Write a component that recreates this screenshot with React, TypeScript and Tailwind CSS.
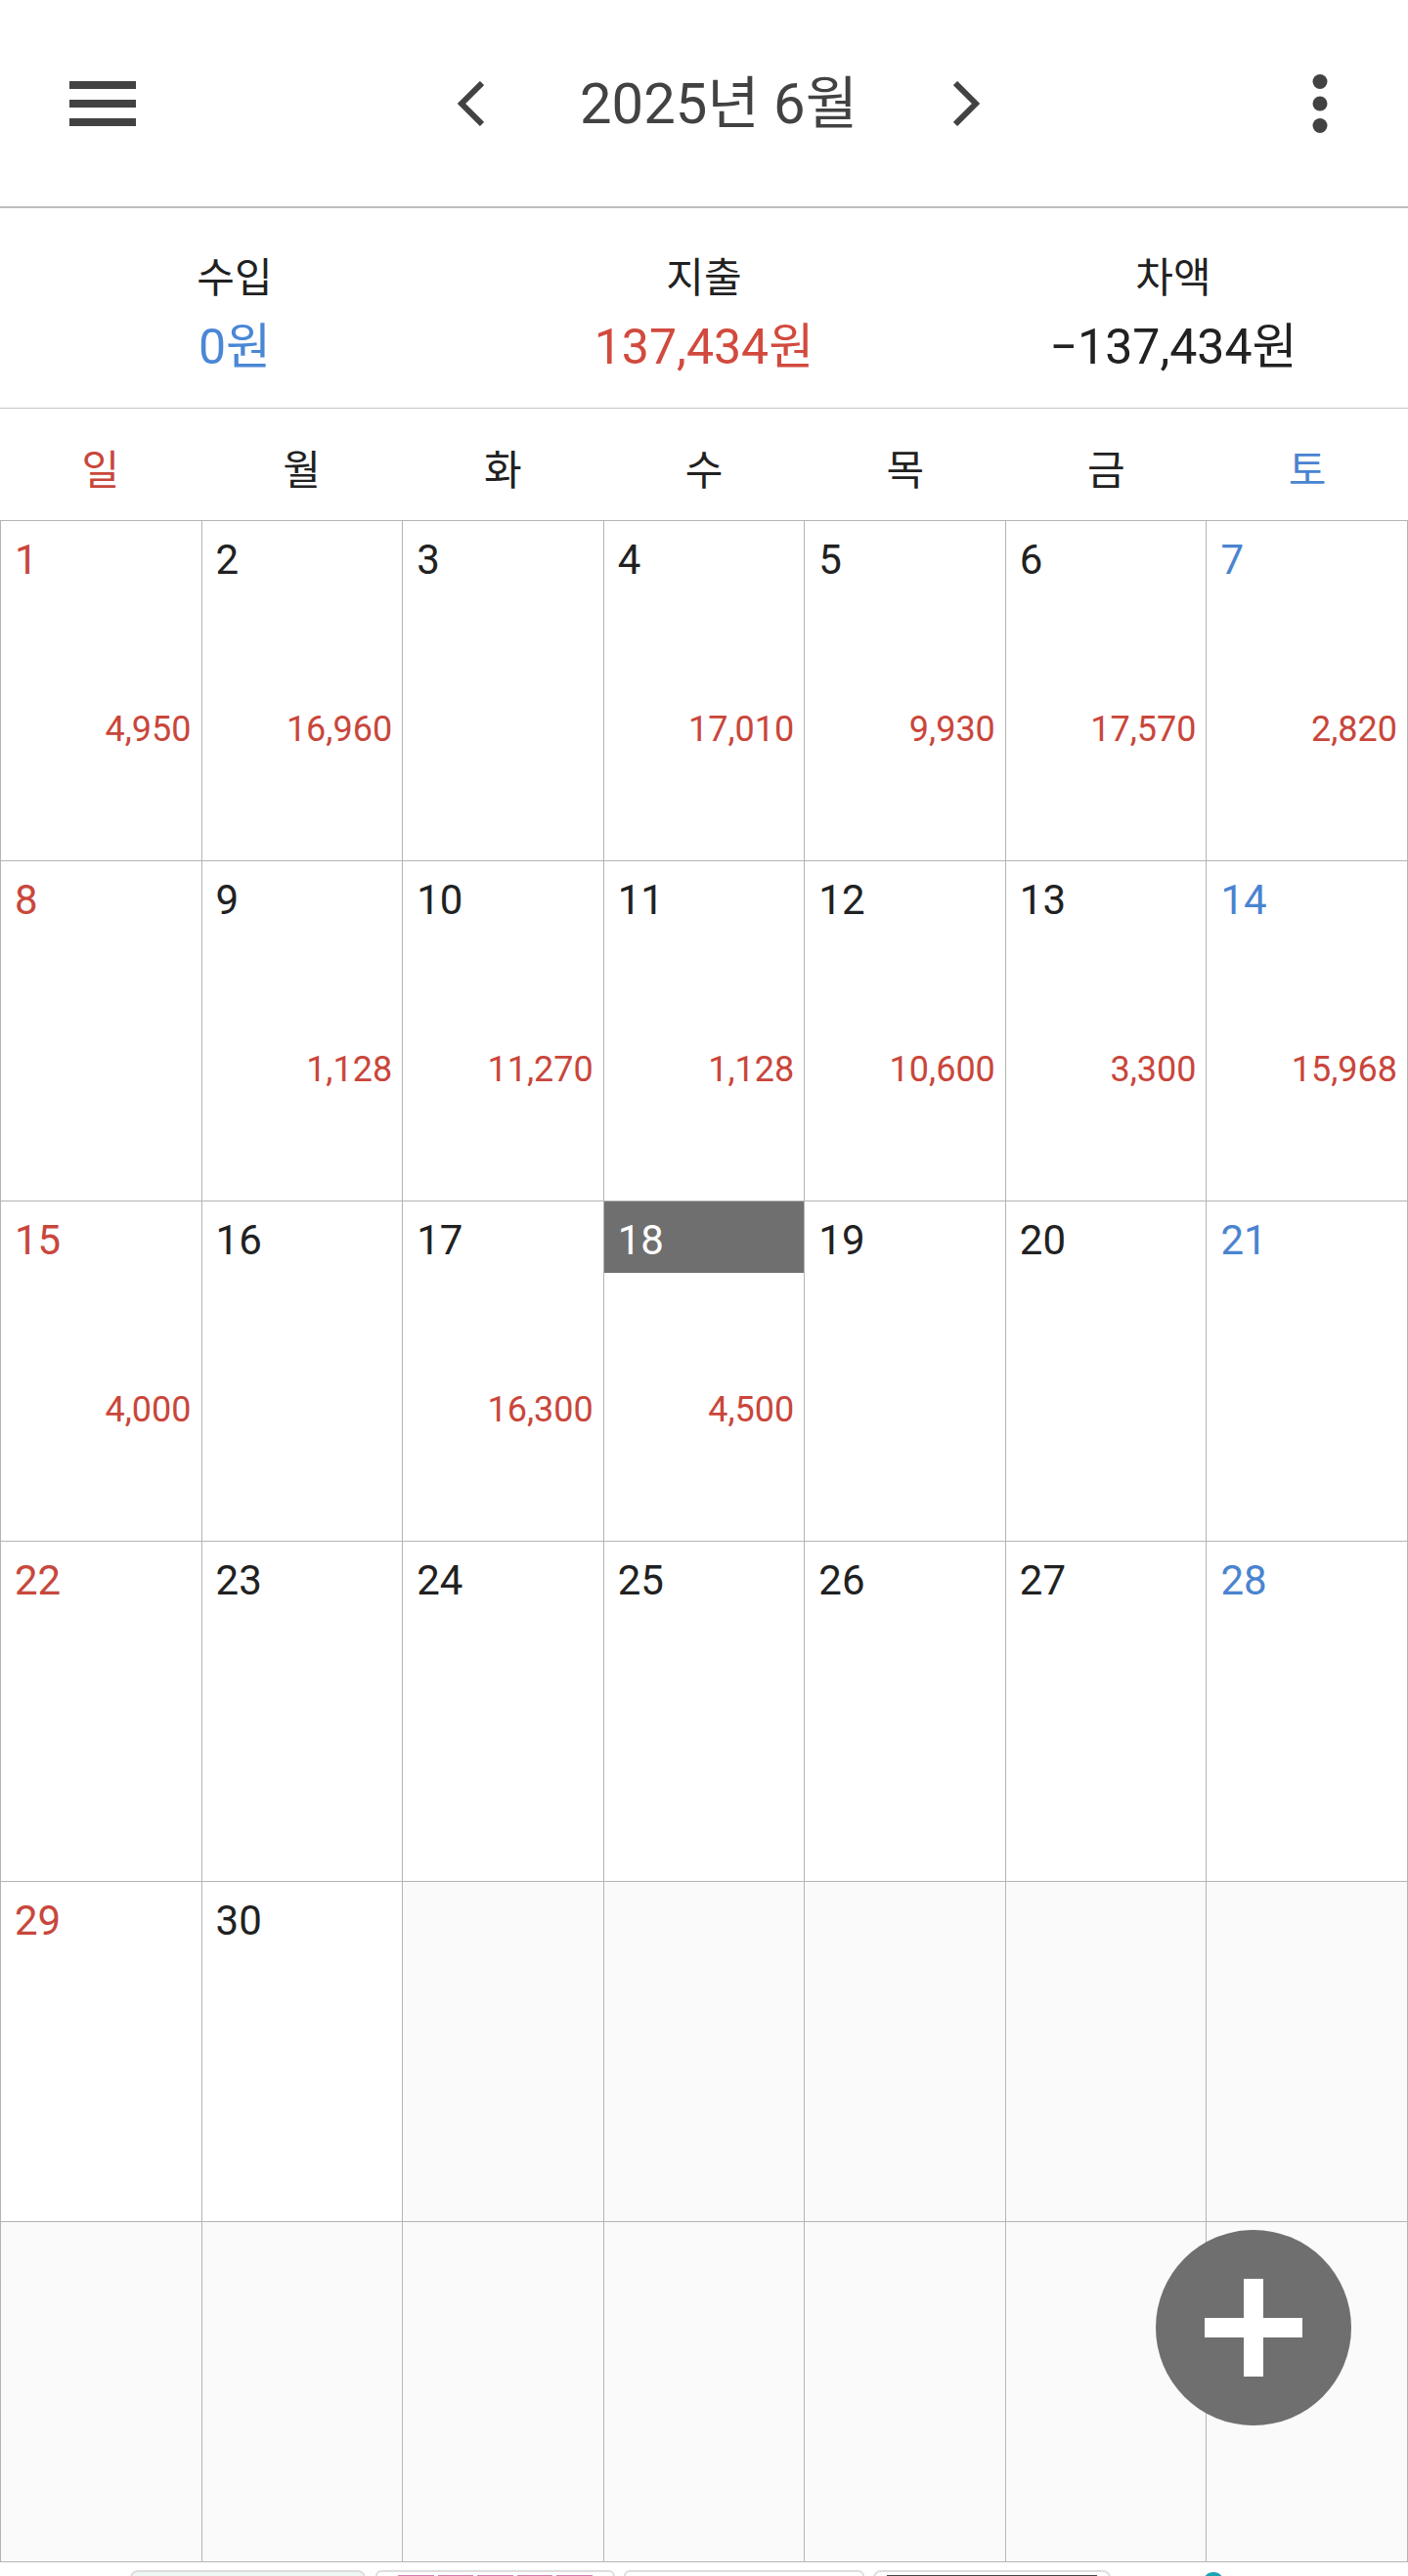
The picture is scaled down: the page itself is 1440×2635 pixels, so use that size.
import React from "react";

type Day = {
  day?: number;
  amount?: string;
};

const weekdays = ["일", "월", "화", "수", "목", "금", "토"];

const amounts: { [key: number]: string } = {
  1: "4,950",
  2: "16,960",
  4: "17,010",
  5: "9,930",
  6: "17,570",
  7: "2,820",
  9: "1,128",
  10: "11,270",
  11: "1,128",
  12: "10,600",
  13: "3,300",
  14: "15,968",
  15: "4,000",
  17: "16,300",
  18: "4,500",
};

const TODAY = 18;

function buildCells(): Day[] {
  const cells: Day[] = [];
  for (let d = 1; d <= 30; d++) {
    cells.push({ day: d, amount: amounts[d] });
  }
  while (cells.length < 42) cells.push({});
  return cells;
}

function dayColor(index: number) {
  const col = index % 7;
  if (col === 0) return "text-[#c8473c]";
  if (col === 6) return "text-[#4a84d0]";
  return "text-[#212121]";
}

function Header() {
  return (
    <div className="flex h-[213px] items-center border-b-2 border-[#bdbdbd] bg-white">
      <svg className="ml-[71px] h-[46px] w-[68px]" viewBox="0 0 68 46">
        <rect x="0" y="0" width="68" height="8" fill="#424242" />
        <rect x="0" y="19" width="68" height="8" fill="#424242" />
        <rect x="0" y="38" width="68" height="8" fill="#424242" />
      </svg>
      <svg className="ml-[329px] h-[46px] w-[27px]" viewBox="0 0 27 46">
        <polyline points="25,2 4,23 25,44" fill="none" stroke="#424242" strokeWidth="6" />
      </svg>
      <div className="w-[480px] text-center text-[58px] leading-[70px] text-[#424242]">2025년 6월</div>
      <svg className="h-[46px] w-[27px]" viewBox="0 0 27 46">
        <polyline points="2,2 23,23 2,44" fill="none" stroke="#424242" strokeWidth="6" />
      </svg>
      <svg className="ml-auto mr-[82px] h-[60px] w-[16px]" viewBox="0 0 16 60">
        <circle cx="8" cy="7.5" r="7.5" fill="#424242" />
        <circle cx="8" cy="30" r="7.5" fill="#424242" />
        <circle cx="8" cy="52.5" r="7.5" fill="#424242" />
      </svg>
    </div>
  );
}

function Summary() {
  const items = [
    { label: "수입", value: "0원", color: "text-[#4a87d6]" },
    { label: "지출", value: "137,434원", color: "text-[#d24a3e]" },
    { label: "차액", value: "−137,434원", color: "text-[#212121]" },
  ];
  return (
    <div className="grid h-[205px] grid-cols-3 items-center border-b border-[#c4c4c4] bg-white pt-[10px]">
      {items.map((item) => (
        <div key={item.label} className="flex flex-col items-center">
          <div className="text-[42px] leading-[70px] text-[#212121]">{item.label}</div>
          <div className={`text-[50px] leading-[70px] ${item.color}`}>{item.value}</div>
        </div>
      ))}
    </div>
  );
}

function Weekdays() {
  return (
    <div className="grid h-[115px] grid-cols-7 items-center border-b border-[#b4b4b4] bg-white">
      {weekdays.map((w, i) => (
        <div key={w} className={`pt-[14px] text-center text-[42px] leading-[60px] ${dayColor(i)}`}>
          {w}
        </div>
      ))}
    </div>
  );
}

function Calendar() {
  const cells = buildCells();
  return (
    <div className="grid grid-cols-7 border-l border-[#b4b4b4]">
      {cells.map((cell, i) => {
        const isToday = cell.day === TODAY;
        return (
          <div
            key={i}
            className={`h-[348px] border-r border-b border-[#b4b4b4] ${cell.day ? "bg-white" : "bg-[#fafafa]"}`}
          >
            {cell.day && (
              <>
                <div
                  className={`h-[73px] pl-[14px] pt-[15px] text-[42px] leading-[50px] ${
                    isToday ? "bg-[#6f6f6f] text-white" : dayColor(i)
                  }`}
                >
                  {cell.day}
                </div>
                {cell.amount && (
                  <div className="mt-[119px] pr-[10px] text-right text-[36px] leading-[43px] text-[#c9463b]">
                    {cell.amount}
                  </div>
                )}
              </>
            )}
          </div>
        );
      })}
    </div>
  );
}

function AdStrip() {
  return (
    <div className="flex h-[14px] items-start overflow-hidden bg-white pt-[8px]">
      <div className="ml-[133px] h-[20px] w-[241px] rounded-t-[8px] border-2 border-[#dedede] bg-[#eef6f6]" />
      <div className="ml-[10px] flex h-[20px] w-[245px] gap-[4px] rounded-t-[6px] border-2 border-[#dedede] bg-white px-[21px] pt-[3px]">
        <div className="h-[10px] flex-1 bg-[#d57ab0]" />
        <div className="h-[10px] flex-1 bg-[#d57ab0]" />
        <div className="h-[10px] flex-1 bg-[#d57ab0]" />
        <div className="h-[10px] flex-1 bg-[#d57ab0]" />
        <div className="h-[10px] flex-1 bg-[#d57ab0]" />
      </div>
      <div className="ml-[9px] h-[20px] w-[246px] rounded-t-[6px] border-2 border-[#dedede] bg-white" />
      <div className="ml-[9px] h-[20px] w-[243px] rounded-t-[8px] border-2 border-[#dedede] bg-white px-[12px] pt-[3px]">
        <div className="h-[6px] bg-[#444444]" />
      </div>
      <div className="ml-[94px] mt-[2px] h-[22px] w-[22px] rounded-full bg-[#1aa3b5]" />
    </div>
  );
}

export default function App() {
  return (
    <div className="relative w-[1440px] bg-white font-['Roboto','Noto_Sans_CJK_KR',sans-serif]">
      <Header />
      <Summary />
      <Weekdays />
      <Calendar />
      <AdStrip />
      <button className="absolute left-[1182px] top-[2281px] flex h-[200px] w-[200px] items-center justify-center rounded-full bg-[#6f6f6f]">
        <svg className="h-[100px] w-[100px]" viewBox="0 0 100 100">
          <rect x="0" y="40" width="100" height="20" fill="#ffffff" />
          <rect x="40" y="0" width="20" height="100" fill="#ffffff" />
        </svg>
      </button>
    </div>
  );
}
